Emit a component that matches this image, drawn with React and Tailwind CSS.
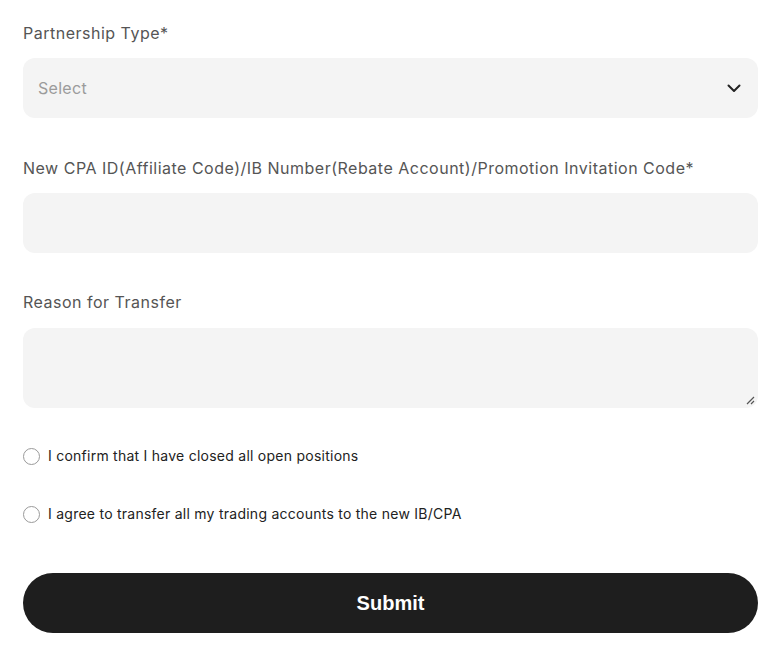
import React from 'react';

const font = { fontFamily: 'Inter, "Noto Sans", sans-serif' };

const Field = ({ label, children, className = '' }) => (
  <div className={className}>
    <label className="block text-[16px] leading-[20px] text-[#555555] tracking-[0.5px]">{label}</label>
    {children}
  </div>
);

const Radio = ({ children }) => (
  <label className="flex items-center gap-[8px] text-[14px] leading-[18px] text-[#222222] tracking-[0.25px]">
    <span className="w-[17px] h-[17px] rounded-full border border-[#9a9a9a] bg-white shrink-0" />
    <span>{children}</span>
  </label>
);

export default function App() {
  return (
    <div className="min-h-screen bg-white px-[23px] pt-[23px]" style={font}>
      <div className="w-[735px]">
        <Field label="Partnership Type*">
          <div className="mt-[15px] h-[60px] rounded-[12px] bg-[#f4f4f4] flex items-center justify-between pl-[15px] pr-[16px]">
            <span className="text-[16px] text-[#9b9b9b] tracking-[0.3px]">Select</span>
            <svg width="16" height="16" viewBox="0 0 16 16" fill="none" stroke="#222" strokeWidth="2" strokeLinecap="round" strokeLinejoin="round">
              <path d="M2.5 5.5 8 11l5.5-5.5" />
            </svg>
          </div>
        </Field>

        <Field label="New CPA ID(Affiliate Code)/IB Number(Rebate Account)/Promotion Invitation Code*" className="mt-[40px]">
          <div className="mt-[15px] h-[60px] rounded-[12px] bg-[#f4f4f4]" />
        </Field>

        <Field label="Reason for Transfer" className="mt-[39px]">
          <div className="mt-[16px] h-[80px] rounded-[12px] bg-[#f4f4f4] flex items-end justify-end p-[3px]">
            <svg width="10" height="10" viewBox="0 0 10 10" stroke="#555" strokeWidth="1.2">
              <path d="M9 2 2 9M9 6 6 9" />
            </svg>
          </div>
        </Field>

        <div className="mt-[39px] flex flex-col gap-[40px]">
          <Radio>I confirm that I have closed all open positions</Radio>
          <Radio>I agree to transfer all my trading accounts to the new IB/CPA</Radio>
        </div>

        <button
          className="mt-[50px] w-full h-[60px] rounded-full bg-[#1e1e1e] text-white text-[20px] font-bold"
          style={{ fontFamily: '"Liberation Sans", Arial, sans-serif' }}
        >
          Submit
        </button>
      </div>
    </div>
  );
}
